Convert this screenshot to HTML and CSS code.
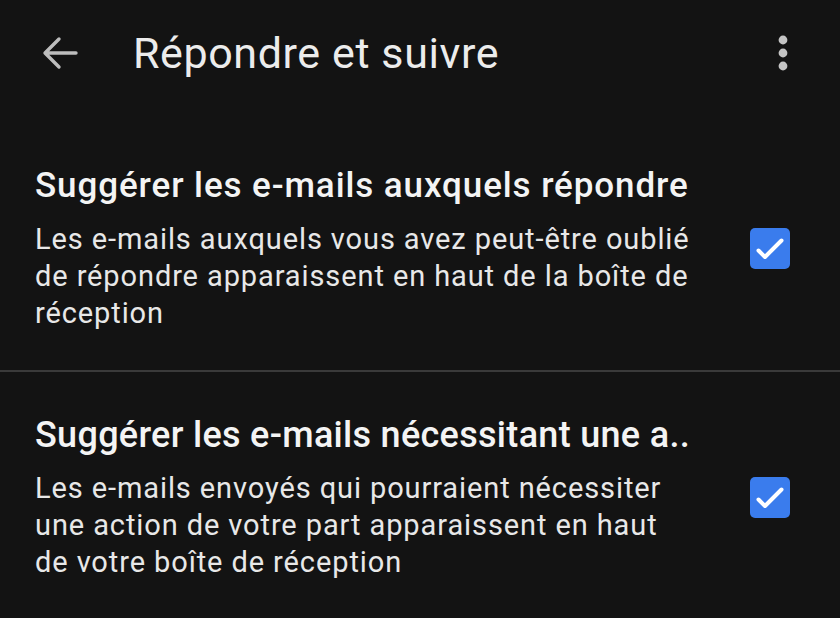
FILE: index.html
```html
<!DOCTYPE html>
<html lang="fr">
<head>
<meta charset="utf-8">
<title>Répondre et suivre</title>
<link rel="stylesheet" href="styles.css">
</head>
<body>
<div class="screen">
  <header class="topbar">
    <button class="icon-btn back" aria-label="Retour">
      <svg viewBox="0 0 36 34" width="36" height="34">
        <path d="M34 17H4M17 3L3 17l14 14" fill="none" stroke="#bdbdbd" stroke-width="3.4" stroke-linecap="round" stroke-linejoin="round"/>
      </svg>
    </button>
    <h1 class="title">Répondre et suivre</h1>
    <button class="icon-btn more" aria-label="Plus d'options">
      <svg viewBox="0 0 10 36" width="10" height="36">
        <circle cx="5" cy="5" r="4.4" fill="#c4c4c4"/>
        <circle cx="5" cy="18" r="4.4" fill="#c4c4c4"/>
        <circle cx="5" cy="31" r="4.4" fill="#c4c4c4"/>
      </svg>
    </button>
  </header>

  <section class="setting first">
    <div class="setting-text">
      <h2 class="setting-title">Suggérer les e-mails auxquels répondre</h2>
      <p class="setting-desc">Les e-mails auxquels vous avez peut-être oublié de répondre apparaissent en haut de la boîte de réception</p>
    </div>
    <span class="checkbox" role="checkbox" aria-checked="true">
      <svg viewBox="0 0 40 41" width="40" height="41"><path d="M8.5 22.5L15 29L31.5 12.5" fill="none" stroke="#fff" stroke-width="4" stroke-linecap="round" stroke-linejoin="round"/></svg>
    </span>
  </section>

  <div class="divider"></div>

  <section class="setting second">
    <div class="setting-text">
      <h2 class="setting-title">Suggérer les e-mails nécessitant une a..</h2>
      <p class="setting-desc">Les e-mails envoyés qui pourraient nécessiter une action de votre part apparaissent en haut de votre boîte de réception</p>
    </div>
    <span class="checkbox" role="checkbox" aria-checked="true">
      <svg viewBox="0 0 40 41" width="40" height="41"><path d="M8.5 22.5L15 29L31.5 12.5" fill="none" stroke="#fff" stroke-width="4" stroke-linecap="round" stroke-linejoin="round"/></svg>
    </span>
  </section>
</div>
</body>
</html>
```
FILE: styles.css
```css
html, body {
  margin: 0;
  padding: 0;
  background: #131313;
}

.screen {
  width: 840px;
  height: 618px;
  overflow: hidden;
  background: #131313;
  color: #f2f2f2;
  font-family: Roboto, "Noto Sans", sans-serif;
}

.topbar {
  height: 106px;
  display: flex;
  align-items: center;
  padding: 0 52px 0 42px;
}

.icon-btn {
  background: none;
  border: 0;
  padding: 0;
  display: flex;
  align-items: center;
  justify-content: center;
}

.back {
  width: 36px;
  height: 34px;
}

.title {
  margin: 0 0 0 55px;
  flex: 1;
  font-size: 43px;
  font-weight: 400;
  color: #ececec;
  letter-spacing: 0.6px;
}

.more {
  width: 10px;
  height: 36px;
}

.setting {
  display: flex;
  align-items: center;
  padding: 58px 50px 0 35px;
}

.setting.first {
  padding-bottom: 38px;
}

.setting.second {
  padding-top: 41px;
}

.setting-text {
  flex: 1;
}

.setting-title {
  margin: 0;
  font-size: 35px;
  line-height: 44px;
  font-weight: 500;
  color: #f4f4f4;
  white-space: nowrap;
  letter-spacing: 0.9px;
}

.setting-desc {
  margin: 13px 0 0;
  font-size: 29px;
  line-height: 37px;
  color: #e8e8e8;
  letter-spacing: 0.9px;
  max-width: 690px;
}

.second .setting-title {
  font-size: 36px;
  letter-spacing: 0.3px;
}

.second .setting-desc {
  font-size: 29px;
  letter-spacing: 0.9px;
  max-width: 645px;
}

.checkbox {
  width: 40px;
  height: 41px;
  border-radius: 5px;
  background: #3a7ced;
  display: flex;
  align-items: center;
  justify-content: center;
  flex-shrink: 0;
  margin-left: 20px;
}

.divider {
  height: 2px;
  background: #3a3a3a;
}
```
